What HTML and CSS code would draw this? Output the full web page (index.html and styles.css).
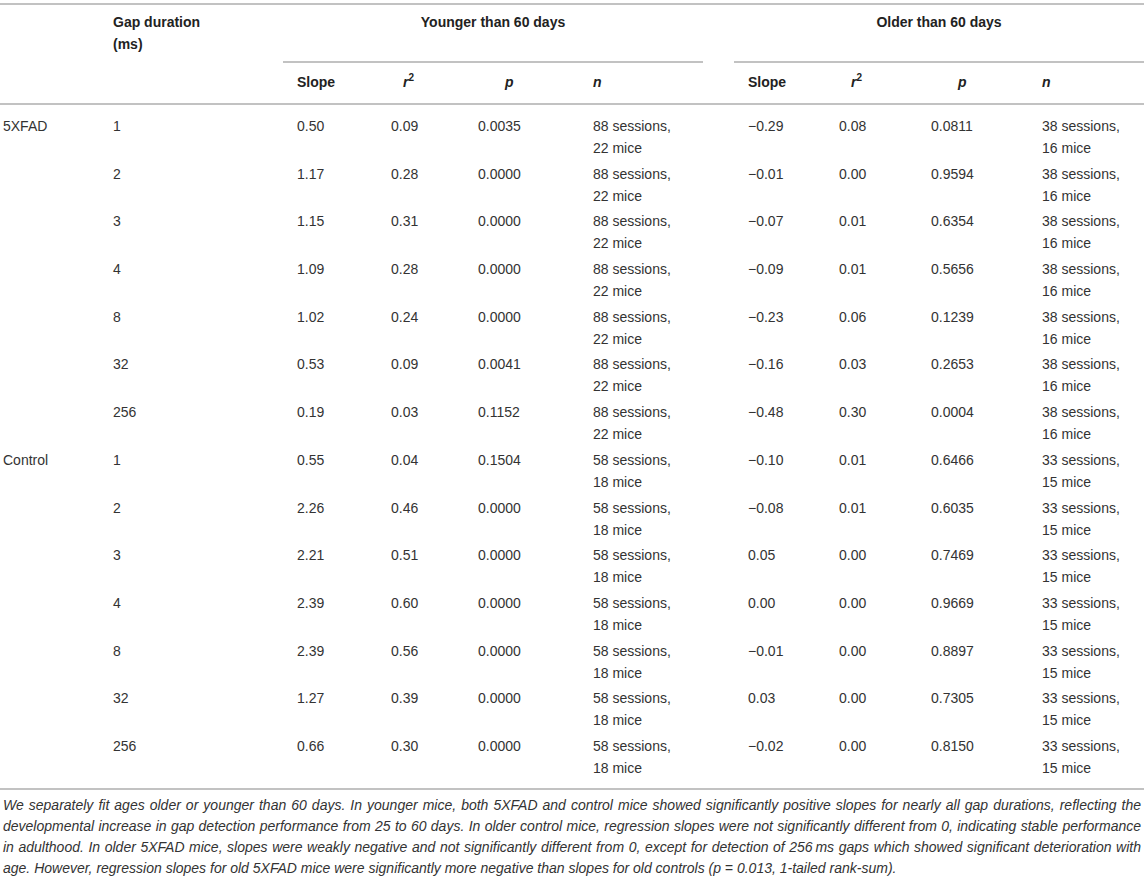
FILE: index.html
```html
<!DOCTYPE html>
<html lang="en">
<head>
<meta charset="utf-8">
<title>Regression slopes</title>
<link rel="stylesheet" href="styles.css">
</head>
<body>
<div class="wrap">
<table class="data">
  <colgroup>
    <col class="c1"><col class="c2"><col class="c3"><col class="c4"><col class="c5">
    <col class="c6"><col class="c7"><col class="c8"><col class="c9"><col class="c10">
  </colgroup>
  <thead>
    <tr class="h1">
      <th class="first"></th>
      <th>Gap duration<br>(ms)</th>
      <th colspan="4" class="group"><div class="g young">Younger than 60 days</div></th>
      <th colspan="4" class="group"><div class="g old">Older than 60 days</div></th>
    </tr>
    <tr class="h2">
      <th class="first"></th>
      <th></th>
      <th>Slope</th>
      <th class="hr"><i>r</i><sup>2</sup></th>
      <th class="hp"><i>p</i></th>
      <th><i>n</i></th>
      <th>Slope</th>
      <th class="hr"><i>r</i><sup>2</sup></th>
      <th class="hp"><i>p</i></th>
      <th><i>n</i></th>
    </tr>
  </thead>
  <tbody>
    <tr class="top"><td class="first">5XFAD</td><td>1</td><td>0.50</td><td>0.09</td><td>0.0035</td><td>88 sessions,<br>22 mice</td><td>−0.29</td><td>0.08</td><td>0.0811</td><td>38 sessions,<br>16 mice</td></tr>
    <tr><td class="first"></td><td>2</td><td>1.17</td><td>0.28</td><td>0.0000</td><td>88 sessions,<br>22 mice</td><td>−0.01</td><td>0.00</td><td>0.9594</td><td>38 sessions,<br>16 mice</td></tr>
    <tr><td class="first"></td><td>3</td><td>1.15</td><td>0.31</td><td>0.0000</td><td>88 sessions,<br>22 mice</td><td>−0.07</td><td>0.01</td><td>0.6354</td><td>38 sessions,<br>16 mice</td></tr>
    <tr><td class="first"></td><td>4</td><td>1.09</td><td>0.28</td><td>0.0000</td><td>88 sessions,<br>22 mice</td><td>−0.09</td><td>0.01</td><td>0.5656</td><td>38 sessions,<br>16 mice</td></tr>
    <tr><td class="first"></td><td>8</td><td>1.02</td><td>0.24</td><td>0.0000</td><td>88 sessions,<br>22 mice</td><td>−0.23</td><td>0.06</td><td>0.1239</td><td>38 sessions,<br>16 mice</td></tr>
    <tr><td class="first"></td><td>32</td><td>0.53</td><td>0.09</td><td>0.0041</td><td>88 sessions,<br>22 mice</td><td>−0.16</td><td>0.03</td><td>0.2653</td><td>38 sessions,<br>16 mice</td></tr>
    <tr><td class="first"></td><td>256</td><td>0.19</td><td>0.03</td><td>0.1152</td><td>88 sessions,<br>22 mice</td><td>−0.48</td><td>0.30</td><td>0.0004</td><td>38 sessions,<br>16 mice</td></tr>
    <tr><td class="first">Control</td><td>1</td><td>0.55</td><td>0.04</td><td>0.1504</td><td>58 sessions,<br>18 mice</td><td>−0.10</td><td>0.01</td><td>0.6466</td><td>33 sessions,<br>15 mice</td></tr>
    <tr><td class="first"></td><td>2</td><td>2.26</td><td>0.46</td><td>0.0000</td><td>58 sessions,<br>18 mice</td><td>−0.08</td><td>0.01</td><td>0.6035</td><td>33 sessions,<br>15 mice</td></tr>
    <tr><td class="first"></td><td>3</td><td>2.21</td><td>0.51</td><td>0.0000</td><td>58 sessions,<br>18 mice</td><td>0.05</td><td>0.00</td><td>0.7469</td><td>33 sessions,<br>15 mice</td></tr>
    <tr><td class="first"></td><td>4</td><td>2.39</td><td>0.60</td><td>0.0000</td><td>58 sessions,<br>18 mice</td><td>0.00</td><td>0.00</td><td>0.9669</td><td>33 sessions,<br>15 mice</td></tr>
    <tr><td class="first"></td><td>8</td><td>2.39</td><td>0.56</td><td>0.0000</td><td>58 sessions,<br>18 mice</td><td>−0.01</td><td>0.00</td><td>0.8897</td><td>33 sessions,<br>15 mice</td></tr>
    <tr><td class="first"></td><td>32</td><td>1.27</td><td>0.39</td><td>0.0000</td><td>58 sessions,<br>18 mice</td><td>0.03</td><td>0.00</td><td>0.7305</td><td>33 sessions,<br>15 mice</td></tr>
    <tr class="bottom"><td class="first"></td><td>256</td><td>0.66</td><td>0.30</td><td>0.0000</td><td>58 sessions,<br>18 mice</td><td>−0.02</td><td>0.00</td><td>0.8150</td><td>33 sessions,<br>15 mice</td></tr>
  </tbody>
</table>
<p class="note">We separately fit ages older or younger than 60 days. In younger mice, both 5XFAD and control mice showed significantly positive slopes for nearly all gap durations, reflecting the developmental increase in gap detection performance from 25 to 60 days. In older control mice, regression slopes were not significantly different from 0, indicating stable performance in adulthood. In older 5XFAD mice, slopes were weakly negative and not significantly different from 0, except for detection of 256&#8201;ms gaps which showed significant deterioration with age. However, regression slopes for old 5XFAD mice were significantly more negative than slopes for old controls (p = 0.013, 1-tailed rank-sum).</p>
</div>
</body>
</html>
```

FILE: styles.css
```css
html, body {
  margin: 0;
  padding: 0;
  background: #ffffff;
}

body {
  font-family: "Liberation Sans", Arial, sans-serif;
  font-size: 14px;
  color: #333333;
}

.wrap {
  width: 1144px;
  padding-top: 3px;
}

.data {
  width: 1144px;
  table-layout: fixed;
  border-collapse: collapse;
  border-top: 2px solid #c2c2c2;
  border-bottom: 2px solid #c2c2c2;
}

.c1 { width: 99px; }
.c2 { width: 184px; }
.c3 { width: 94px; }
.c4 { width: 87px; }
.c5 { width: 115px; }
.c6 { width: 155px; }
.c7 { width: 91px; }
.c8 { width: 92px; }
.c9 { width: 111px; }
.c10 { width: 116px; }

th, td {
  text-align: left;
  vertical-align: top;
  padding: 0 0 0 14px;
  line-height: 22px;
}

th.first, td.first {
  padding-left: 3px;
}

th {
  font-weight: bold;
  color: #222222;
}

thead .h1 th {
  padding-top: 6px;
  padding-bottom: 6px;
}

thead .h1 th.group {
  padding: 6px 0 0 0;
  text-align: center;
}

.g {
  border-bottom: 2px solid #c2c2c2;
  padding-bottom: 28px;
}

.g.young {
  margin-right: 31px;
}

thead .h2 th {
  padding-top: 8px;
  padding-bottom: 10px;
  border-bottom: 2px solid #c2c2c2;
}

thead .h2 th.hr {
  padding-left: 26px;
}

thead .h2 th.hp {
  padding-left: 41px;
}

sup {
  font-size: 10px;
  line-height: 0;
  vertical-align: 6px;
  font-style: normal;
}

tbody td {
  padding-top: 2px;
  padding-bottom: 1.7px;
  line-height: 22px;
}

tbody tr.top td {
  padding-top: 10px;
}

tbody tr.bottom td {
  padding-bottom: 9px;
}

.note {
  margin: 0;
  padding: 5px 3px 0 3px;
  font-style: italic;
  line-height: 21px;
  text-align: justify;
  color: #333333;
}
```
